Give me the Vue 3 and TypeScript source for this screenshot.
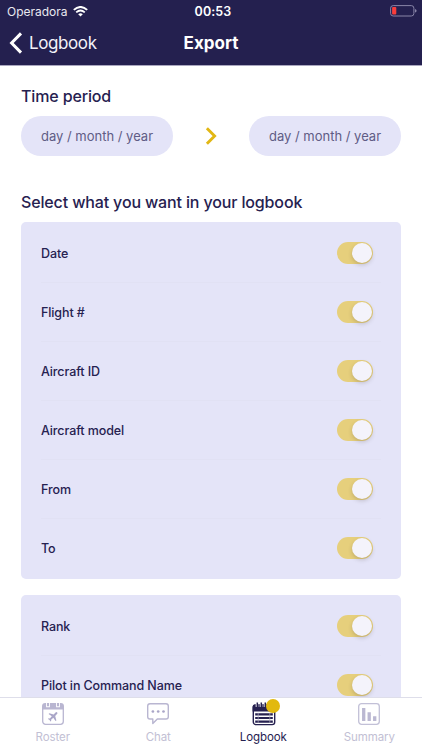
<script setup lang="ts">
import { ref } from 'vue'

interface Field {
  label: string
  on: boolean
}

const groups = ref<Field[][]>([
  [
    { label: 'Date', on: true },
    { label: 'Flight #', on: true },
    { label: 'Aircraft ID', on: true },
    { label: 'Aircraft model', on: true },
    { label: 'From', on: true },
    { label: 'To', on: true },
  ],
  [
    { label: 'Rank', on: true },
    { label: 'Pilot in Command Name', on: true },
  ],
])
</script>

<template>
  <div class="screen">
    <header class="top">
      <div class="status">
        <div class="carrier">
          <span class="operator">Operadora</span>
          <svg class="wifi" width="15" height="11" viewBox="0 0 15 11">
            <path d="M0.8 3.9 Q7.5 -2 14.2 3.9" fill="none" stroke="#fff" stroke-width="1.9" />
            <path d="M3.2 6.4 Q7.5 2.7 11.8 6.4" fill="none" stroke="#fff" stroke-width="1.8" />
            <path d="M5.2 8.2 Q7.5 6.3 9.8 8.2 L7.5 10.6 Z" fill="#fff" />
          </svg>
        </div>
        <span class="clock">00:53</span>
        <svg class="battery" width="27" height="12" viewBox="0 0 27 12">
          <rect x="0.6" y="0.6" width="23.3" height="10.4" rx="2.6" fill="none" stroke="#8985a8" stroke-width="1" />
          <rect x="2.1" y="2.1" width="4.2" height="7.4" rx="0.9" fill="#f93d3b" />
          <path d="M25 4 Q26.6 4.4 26.6 5.8 Q26.6 7.2 25 7.6 Z" fill="#8985a8" />
        </svg>
      </div>
      <div class="nav">
        <div class="back">
          <svg width="14" height="22" viewBox="0 0 14 22">
            <path d="M12 1.4 L2.6 11 L12 20.6" fill="none" stroke="#fff" stroke-width="3" />
          </svg>
          <span>Logbook</span>
        </div>
        <h1>Export</h1>
        <div></div>
      </div>
    </header>

    <main class="content">
      <h2 class="period-title">Time period</h2>
      <div class="period">
        <div class="pill">day / month / year</div>
        <svg width="12" height="18" viewBox="0 0 12 18">
          <path d="M1.9 1.3 L9.6 9 L1.9 16.7" fill="none" stroke="#e2b714" stroke-width="2.9" />
        </svg>
        <div class="pill">day / month / year</div>
      </div>
      <h2 class="select-title">Select what you want in your logbook</h2>
      <section v-for="(group, i) in groups" :key="i" class="card">
        <div v-for="field in group" :key="field.label" class="row">
          <span class="label">{{ field.label }}</span>
          <button
            class="switch"
            :class="{ on: field.on }"
            role="switch"
            :aria-checked="field.on"
            @click="field.on = !field.on"
          >
            <i class="knob"></i>
          </button>
        </div>
      </section>
    </main>

    <footer class="tabs">
      <div class="tab">
        <svg width="24" height="24" viewBox="0 0 24 24">
          <rect x="1.7" y="2.7" width="20.6" height="19.6" rx="2.8" fill="none" stroke="#b9b6d1" stroke-width="1.3" />
          <path d="M1.1 7.4 V4 Q1.1 1 4.1 1 H19.9 Q22.9 1 22.9 4 V7.4 Z" fill="#b9b6d1" />
          <path d="M7 0 V5.2 M17 0 V5.2" stroke="#fff" stroke-width="3.8" />
          <path d="M7 1 V4.2 M17 1 V4.2" stroke="#b9b6d1" stroke-width="2" />
          <path d="M16.2 10.4 Q17 11.3 16 12.1 L14.2 13.9 L15.4 18.4 L14.5 19 L12.3 15.8 L10.1 17.7 L10.2 19 L9.4 19.5 L8.6 17.9 L7 17.1 L7.6 16.3 L8.9 16.4 L10.8 14.2 L7.6 12.1 L8.3 11.2 L12.7 12.4 L14.5 10.6 Q15.4 9.7 16.2 10.4 Z" fill="#aaa6c8" />
        </svg>
        <span>Roster</span>
      </div>
      <div class="tab">
        <svg width="24" height="24" viewBox="0 0 24 24">
          <path d="M4 1.8 H20 Q22.3 1.8 22.3 4.1 V14.7 Q22.3 17 20 17 H11.3 L6.8 21.6 V17 H4 Q1.7 17 1.7 14.7 V4.1 Q1.7 1.8 4 1.8 Z" fill="none" stroke="#b9b6d1" stroke-width="1.4" stroke-linejoin="round" />
          <g fill="#a9a5c7">
            <circle cx="6.9" cy="9.5" r="1.35" />
            <circle cx="12.2" cy="9.5" r="1.35" />
            <circle cx="17.5" cy="9.5" r="1.35" />
          </g>
        </svg>
        <span>Chat</span>
      </div>
      <div class="tab active">
        <svg width="24" height="24" viewBox="0 0 24 24">
          <rect x="1.3" y="3" width="21.4" height="19.6" rx="2.6" fill="#fff" stroke="#262150" stroke-width="1.4" />
          <path d="M0.6 9.5 V4.8 Q0.6 2.5 3 2.5 H21 Q23.4 2.5 23.4 4.8 V9.5 Z" fill="#262150" />
          <path d="M5 0 V5 M9 0 V5 M13 0 V5 M17 0 V5" stroke="#fff" stroke-width="2.6" />
          <path d="M5.3 0.5 V5.5 M9.3 0.5 V5.5 M13.3 0.5 V5.5 M17.3 0.5 V5.5" stroke="#262150" stroke-width="1.5" />
          <path d="M3.2 12.4 H20.8 M3.2 16 H20.8 M3.2 19.6 H20.8" stroke="#262150" stroke-width="2.2" />
          <path d="M6.2 10.8 V20.8 M17.8 10.8 V20.8" stroke="#aaa7bd" stroke-width="0.7" />
        </svg>
        <i class="badge"></i>
        <span>Logbook</span>
      </div>
      <div class="tab">
        <svg width="24" height="24" viewBox="0 0 24 24">
          <rect x="1.7" y="1.7" width="20.6" height="20.6" rx="2.8" fill="none" stroke="#c2c0d7" stroke-width="1.3" />
          <path d="M6.7 6 V19 M12.2 10.3 V19 M17.7 14.2 V19" stroke="#bbb8d2" stroke-width="3.3" />
        </svg>
        <span>Summary</span>
      </div>
    </footer>
  </div>
</template>

<style>
body {
  margin: 0;
  overflow: hidden;
}
</style>

<style scoped>
.screen {
  display: flex;
  flex-direction: column;
  width: 422px;
  height: 750px;
  overflow: hidden;
  background: #fff;
  color: #262150;
  font-family: Inter, sans-serif;
}
.top {
  flex: none;
  box-sizing: border-box;
  height: 66px;
  background: #24204f;
  border-bottom: 1px solid #aaa7bf;
  color: #fff;
}
.status {
  display: grid;
  grid-template-columns: 1fr auto 1fr;
  align-items: center;
  height: 22px;
  padding: 0 5px 0 7px;
}
.carrier {
  display: flex;
  align-items: center;
  gap: 5px;
}
.operator {
  font-size: 12px;
  color: #e9e8f0;
}
.clock {
  padding-left: 2px;
  font-size: 12.5px;
  font-weight: 600;
  letter-spacing: 0.1px;
}
.battery {
  justify-self: end;
}
.nav {
  display: grid;
  grid-template-columns: 1fr auto 1fr;
  align-items: center;
  height: 42px;
  padding: 0 9px;
}
.back {
  display: flex;
  align-items: center;
  gap: 6px;
  font-size: 17px;
  letter-spacing: -0.4px;
  color: #f3f2f8;
}
h1 {
  margin: 0;
  font-size: 17px;
  font-weight: 700;
}
h2 {
  margin: 0;
  font-size: 16px;
  line-height: 20px;
  font-weight: 500;
  letter-spacing: -0.14px;
}
.content {
  flex: 1;
  min-height: 0;
  overflow: hidden;
  padding: 20px 21px 0;
}
.period {
  display: flex;
  align-items: center;
  justify-content: space-between;
  margin-top: 10px;
}
.pill {
  width: 152px;
  height: 40px;
  line-height: 41px;
  border-radius: 20px;
  background: #e4e4f8;
  color: #605c85;
  font-size: 13px;
  text-align: center;
}
.select-title {
  margin: 36px 0 10px;
}
.card {
  margin-bottom: 16px;
  padding: 1px 20px 2px;
  border-radius: 5px;
  background: #e4e4f8;
}
.row {
  display: flex;
  align-items: center;
  justify-content: space-between;
  height: 59px;
  padding-right: 8px;
  font-size: 12.5px;
  font-weight: 500;
  letter-spacing: -0.1px;
  box-sizing: border-box;
}
.row + .row {
  background: linear-gradient(#e1e1f4, #e1e1f4) top / 100% 1px no-repeat;
}
.label {
  padding-top: 1px;
}
.switch {
  display: flex;
  align-items: center;
  box-sizing: border-box;
  width: 36px;
  height: 22px;
  padding: 1px;
  border: 0;
  border-radius: 11px;
  background: #cfcfe2;
}
.switch.on {
  justify-content: flex-end;
  background: #e6cf7c;
}
.knob {
  width: 20px;
  height: 20px;
  border-radius: 50%;
  background: #f4f3fb;
  box-shadow: 0 2px 4px rgba(80, 65, 60, 0.24);
}
.tabs {
  flex: none;
  display: grid;
  grid-template-columns: repeat(4, 1fr);
  box-sizing: border-box;
  height: 53px;
  border-top: 1px solid #dedeea;
  background: #fff;
}
.tab {
  position: relative;
  display: flex;
  flex-direction: column;
  align-items: center;
  padding-top: 4px;
  color: #c2c0d4;
  font-size: 11.5px;
  letter-spacing: -0.08px;
  line-height: 16px;
}
.tab svg {
  margin-bottom: 3px;
}
.tab.active {
  color: #262150;
}
.tab.active span {
  margin-left: -1px;
}
.badge {
  position: absolute;
  top: 1px;
  left: 55px;
  width: 14px;
  height: 14px;
  border-radius: 50%;
  background: #e2b90e;
}
</style>
